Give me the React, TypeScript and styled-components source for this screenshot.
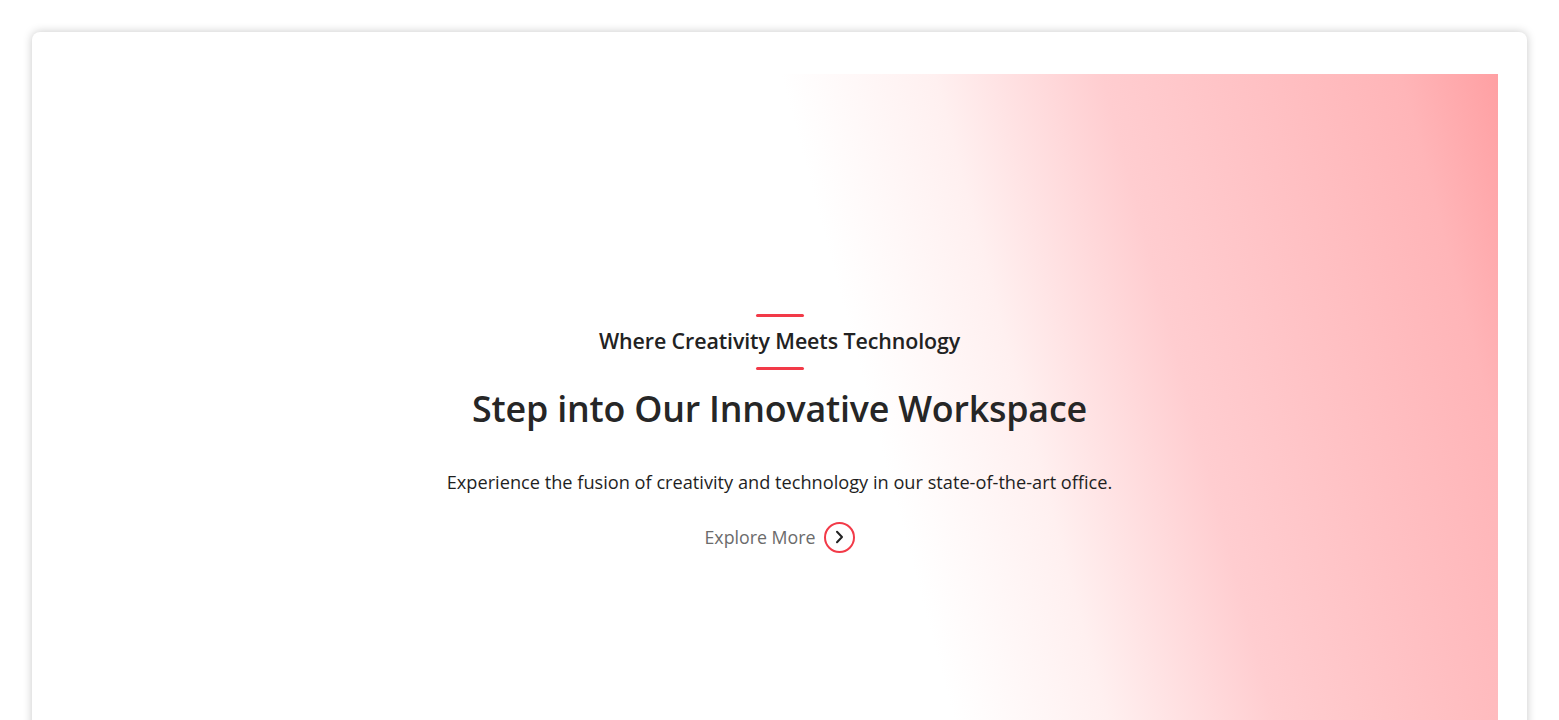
import React from "react";
import styled, { createGlobalStyle } from "styled-components";

const Global = createGlobalStyle`
  html, body { margin: 0; padding: 0; background: #ffffff; }
  body { font-family: "Open Sans", "Noto Sans", sans-serif; overflow: hidden; }
  * { box-sizing: border-box; }
`;

const Page = styled.div`
  padding: 32px 32px 0 32px;
`;

const Card = styled.section`
  background: #ffffff;
  border-radius: 8px;
  box-shadow: 0 0 10px rgba(0, 0, 0, 0.22);
  padding: 42px 29px 40px 29px;
`;

const Hero = styled.div`
  height: 720px;
  display: flex;
  flex-direction: column;
  align-items: center;
  justify-content: center;
  text-align: center;
  padding-bottom: 2px;
  background: linear-gradient(
    75deg,
    rgba(255, 255, 255, 0) 0%,
    rgba(255, 255, 255, 0) 56%,
    #fff0f0 65.4%,
    #ffcdd0 75.7%,
    #ffb5b8 94%,
    #ffa0a3 100%
  );
`;

const Rule = styled.span`
  display: block;
  width: 48px;
  height: 3px;
  border-radius: 2px;
  background: #f23a48;
`;

const Eyebrow = styled.h3`
  margin: 10px 0 12px;
  font-size: 21.4px;
  font-weight: 600;
  color: #222222;
  line-height: 28px;
  letter-spacing: -0.1px;
`;

const Title = styled.h1`
  margin: 15px 0 0;
  font-size: 35.8px;
  font-weight: 600;
  color: #262626;
  line-height: 46px;
  letter-spacing: -0.2px;
`;

const Lead = styled.p`
  margin: 39px 0 0;
  font-size: 18.2px;
  color: #1f1f1f;
  line-height: 24px;
`;

const Explore = styled.a`
  margin-top: 28px;
  display: inline-flex;
  align-items: center;
  gap: 8px;
  font-size: 17.8px;
  color: #6b6b6b;
  text-decoration: none;
  cursor: pointer;
`;

const Circle = styled.span`
  width: 31px;
  height: 31px;
  border-radius: 50%;
  border: 2px solid #f23a48;
  display: inline-flex;
  align-items: center;
  justify-content: center;
`;

export default function App() {
  return (
    <>
      <Global />
      <Page>
        <Card>
          <Hero>
            <Rule />
            <Eyebrow>Where Creativity Meets Technology</Eyebrow>
            <Rule />
            <Title>Step into Our Innovative Workspace</Title>
            <Lead>
              Experience the fusion of creativity and technology in our state-of-the-art office.
            </Lead>
            <Explore>
              Explore More
              <Circle>
                <svg width="16" height="16" viewBox="0 0 16 16" fill="none">
                  <path d="M6 2.8 L11 8 L6 13.2" stroke="#222" strokeWidth="2" strokeLinecap="round" strokeLinejoin="round" />
                </svg>
              </Circle>
            </Explore>
          </Hero>
        </Card>
      </Page>
    </>
  );
}
